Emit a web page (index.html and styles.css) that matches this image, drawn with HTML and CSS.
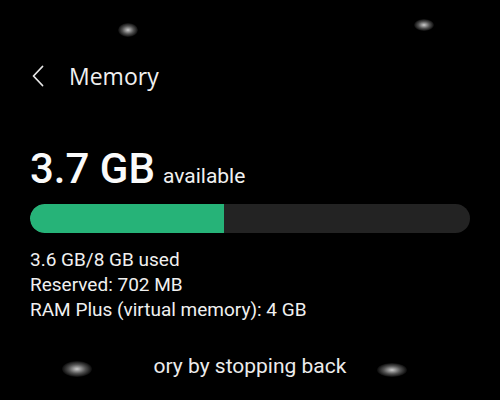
FILE: index.html
```html
<!DOCTYPE html>
<html lang="en">
<head>
  <meta charset="UTF-8">
  <meta name="viewport" content="width=device-width, initial-scale=1.0">
  <title>Memory</title>
  <link rel="stylesheet" href="styles.css">
</head>
<body>

  <div class="screen">

    <!-- 标题栏 -->
    <div class="header">
      <svg class="back" width="12" height="22" viewBox="0 0 12 22">
        <path d="M10.5 1.5 L1.5 11 L10.5 20.5" fill="none" stroke="#e6e6e6" stroke-width="1.8" stroke-linecap="round" stroke-linejoin="round"/>
      </svg>
      <span class="title">Memory</span>
    </div>

    <!-- 可用内存 -->
    <div class="summary">
      <span class="amount">3.7 GB</span>
      <span class="unit">available</span>
    </div>

    <div class="bar">
      <div class="bar-fill" style="width: 44%"></div>
    </div>

    <div class="details">
      <div>3.6 GB/8 GB used</div>
      <div>Reserved: 702 MB</div>
      <div>RAM Plus (virtual memory): 4 GB</div>
    </div>

    <div class="footer">ory by stopping back</div>

  </div>

  <!-- 反光斑点 -->
  <div class="glare g1"></div>
  <div class="glare g2"></div>
  <div class="glare g3"></div>
  <div class="glare g4"></div>

</body>
</html>
```

FILE: styles.css
```css
body{
  margin: 0;
  background: #000;
  color: #f2f2f2;
  font-family: Roboto, "Liberation Sans", sans-serif;
  height: 400px;
  overflow: hidden;
  position: relative;
}

.screen{
  padding: 0 30px;
}

.header{
  display: flex;
  align-items: center;
  height: 40px;
  margin-top: 56px;
  padding-left: 2px;
}

.back{
  display: block;
}

.title{
  margin-left: 25px;
  font-family: "Open Sans", sans-serif;
  font-size: 23px;
  color: #f0f0f0;
}

.summary{
  display: flex;
  align-items: baseline;
  margin-top: 52px;
  height: 42px;
  white-space: nowrap;
}

.amount{
  font-size: 42px;
  line-height: 42px;
  font-weight: 500;
  color: #fafafa;
}

.unit{
  margin-left: 8px;
  font-size: 21px;
  line-height: 21px;
  color: #f0f0f0;
}

.bar{
  margin-top: 14px;
  height: 29px;
  border-radius: 15px;
  background-color: #232323;
  overflow: hidden;
}

.bar-fill{
  height: 100%;
  background-color: #26b378;
  border-radius: 15px 0 0 15px;
}

.details{
  margin-top: 14px;
  font-size: 19px;
  line-height: 25px;
  color: #f0f0f0;
}

.footer{
  margin-top: 32px;
  text-align: center;
  font-size: 21px;
  line-height: 25px;
  color: #ececec;
}

.glare{
  position: absolute;
  border-radius: 50%;
  background: radial-gradient(ellipse at center, rgba(225,225,225,.9) 0, rgba(180,180,180,.45) 40%, rgba(0,0,0,0) 75%);
}

.g1{ left: 118px; top: 23px; width: 20px; height: 14px; }
.g2{ left: 414px; top: 19px; width: 20px; height: 12px; }
.g3{ left: 62px; top: 361px; width: 30px; height: 16px; }
.g4{ left: 377px; top: 363px; width: 30px; height: 14px; }
```
